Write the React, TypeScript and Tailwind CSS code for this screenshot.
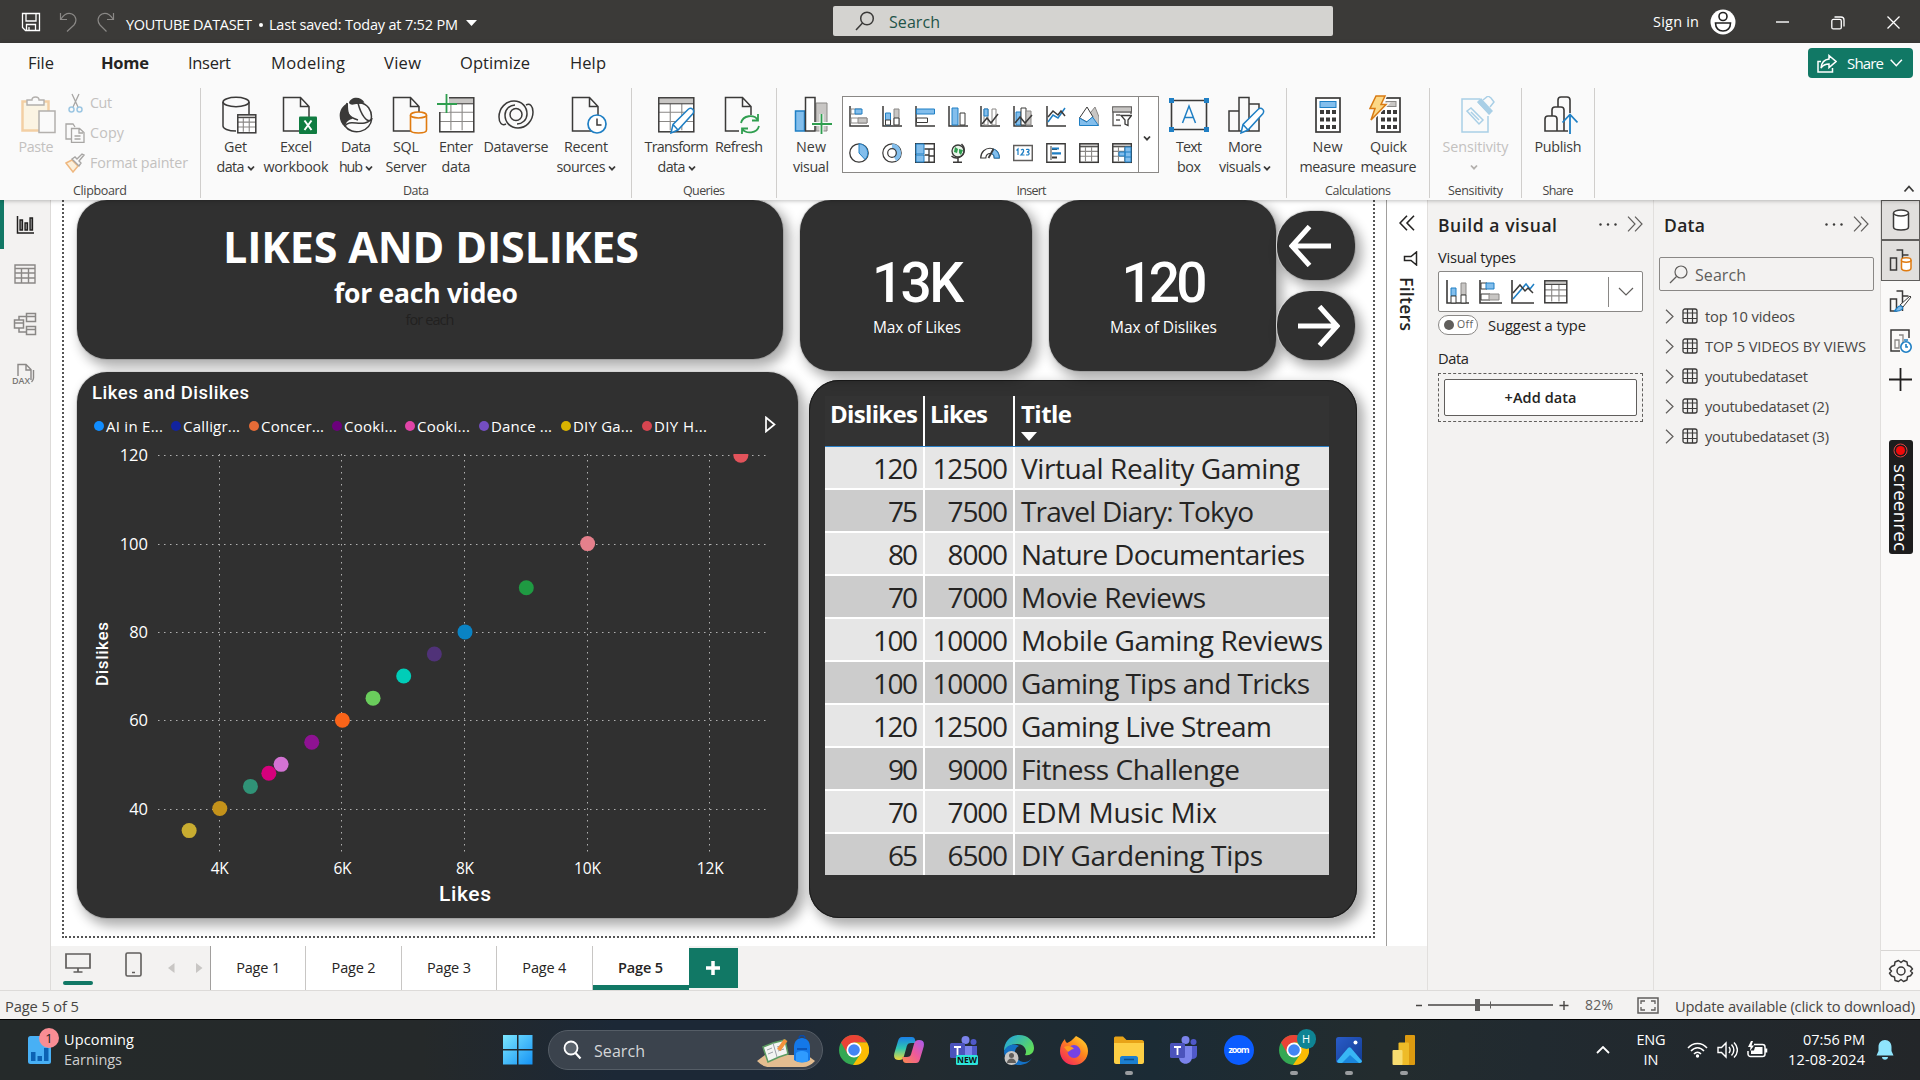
import React, { useLayoutEffect, useRef, useState } from "react";

type TProps = { w?: number; vertical?: boolean; className?: string; children: string };

/* Text whose letter spacing is tuned so that it fills a given length. */
function T({ w, vertical, className = "", children }: TProps) {
  const ref = useRef<HTMLSpanElement>(null);
  const [ls, setLs] = useState(0);
  useLayoutEffect(() => {
    if (!w || !ref.current || children.length < 2) return;
    const r = ref.current.getBoundingClientRect();
    setLs((w - (vertical ? r.height : r.width)) / (children.length - 1));
  }, []);
  return (
    <span
      ref={ref}
      className={"inline-block whitespace-nowrap " + className}
      style={vertical ? { letterSpacing: ls } : { letterSpacing: ls, marginRight: ls ? -ls : undefined }}
    >
      {children}
    </span>
  );
}

type SProps = { w: number; h: number; className?: string; children: React.ReactNode };
const S = ({ w, h, className = "", children }: SProps) => (
  <svg width={w} height={h} viewBox={`0 0 ${w} ${h}`} fill="none" className={"block shrink-0 " + className}>
    {children}
  </svg>
);

const K = "#3b3a39";
const B = "#83beec";
const BD = "#1f7fc4";
const G = "#c8c6c4";

const Chev = ({ c = "#3b3a39" }: { c?: string }) => (
  <S w={8} h={7} className="ml-[2px] mt-[2px]">
    <path d="M1 1.500l3 3.200 3-3.200" stroke={c} strokeWidth="1.800" />
  </S>
);

/* ---------- Title bar ---------- */
function TitleBar() {
  return (
    <div className="flex h-[43px] w-full items-center bg-[#3b3a38] text-white">
      <div className="flex w-[833px] items-center">
        <S w={20} h={20} className="ml-[21px]">
          <path d="M1.500 1.500h17v17H4.500l-3-3zM5 1.500v7.500h10V1.500M5.500 18.500V12.500h9V18.500M8 18v-3" stroke="#fff" strokeWidth="1.300" />
        </S>
        <S w={20} h={22} className="ml-[18px]">
          <path d="M1.500 2v6.500H8M2 8C5 3.500 9 1.500 13 3c4.500 2 5 7.500 2 11l-7 6.500" stroke="#8a8886" strokeWidth="1.200" />
        </S>
        <S w={20} h={22} className="ml-[17px]">
          <path d="M17.500 2v6.500H11M17 8C14 3.500 10 1.500 6 3 1.500 5 1 10.500 4 14l6.500 6.500" stroke="#8a8886" strokeWidth="1.200" />
        </S>
        <div className="ml-[10px] mt-[6px] flex items-center text-[14.5px] leading-5">
          <T w={126}>YOUTUBE DATASET</T>
          <span className="ml-[7px] mr-[6px] h-1 w-1 rounded-full bg-white" />
          <T w={189}>Last saved: Today at 7:52 PM</T>
          <S w={12} h={7} className="ml-[8px] -mt-[2px]">
            <path d="M0 0h11L5.500 6z" fill="#fff" />
          </S>
        </div>
      </div>
      <div className="mb-[1px] flex h-[30px] w-[500px] items-center rounded-[2px] bg-[#d4d3d0] text-[#1f5348]">
        <S w={20} h={20} className="ml-[22px]">
          <circle cx="12" cy="7.500" r="6.300" stroke={K} strokeWidth="1.500" />
          <path d="M7.500 12L1 19" stroke={K} strokeWidth="1.500" />
        </S>
        <T w={51} className="ml-[14px] mt-[1px] text-base leading-5">Search</T>
      </div>
      <div className="ml-[320px] flex items-center">
        <T w={46} className="text-[14.5px] leading-5">Sign in</T>
        <S w={26} h={26} className="ml-[11px]">
          <circle cx="13" cy="13" r="12.500" fill="#fff" />
          <circle cx="13" cy="7.500" r="4" stroke="#222" strokeWidth="1.600" />
          <path d="M5.500 14h15c0 5-3 8-7.500 8s-7.500-3-7.500-8z" stroke="#222" strokeWidth="1.600" />
        </S>
        <S w={13} h={2} className="ml-[40px]"><path d="M0 1h13" stroke="#fff" strokeWidth="1.400" /></S>
        <S w={14} h={14} className="ml-[42px] mt-[2px]">
          <rect x="0.800" y="3.400" width="9.500" height="9.500" rx="1.500" stroke="#fff" strokeWidth="1.300" />
          <path d="M3.500 1h6.500a3 3 0 0 1 3 3v6.500" stroke="#fff" strokeWidth="1.300" />
        </S>
        <S w={13} h={13} className="ml-[42px] mt-[2px]"><path d="M.5.5l12 12M12.500.5l-12 12" stroke="#fff" strokeWidth="1.300" /></S>
      </div>
    </div>
  );
}

/* ---------- Menu ---------- */
function Menu() {
  return (
    <div className="flex h-[45px] items-center text-[16.500px] text-[#252423]">
      <T w={26} className="ml-[28px] -mt-[5px]">File</T>
      <T w={48} className="ml-[47px] -mt-[5px] font-bold">Home</T>
      <T w={43} className="ml-[39px] -mt-[5px]">Insert</T>
      <T w={74} className="ml-[40px] -mt-[5px]">Modeling</T>
      <T w={37} className="ml-[39px] -mt-[5px]">View</T>
      <T w={70} className="ml-[39px] -mt-[5px]">Optimize</T>
      <T w={36} className="ml-[40px] -mt-[5px]">Help</T>
      <div className="-mt-[5px] ml-auto mr-[7px] flex h-[30px] w-[105px] items-center rounded-[4px] bg-[#117865] text-white">
        <S w={20} h={19} className="ml-[9px]">
          <path d="M4 7.500H1V18h14.500v-4M12 1.500l7 6-7 6v-3.500c-4 0-6 1-8 4 .5-5 3-8.500 8-9z" stroke="#fff" strokeWidth="1.500" />
        </S>
        <T w={37} className="ml-[10px] text-[15px]">Share</T>
        <S w={13} h={8} className="ml-[6px]"><path d="M.7.7l5.600 6 5.600-6" stroke="#fff" strokeWidth="1.500" /></S>
      </div>
    </div>
  );
}

/* ---------- Ribbon icons ---------- */
const Doc = () => <path d="M1.500 1.500h17l8.500 9v24.500H1.500zM18.500 1.500v9h8.500" stroke={K} strokeWidth="1.500" fill="#fafafa" />;
const Grid = ({ x = 0, y = 0, w = 35, h = 36, c = K, head = G }: any) => (
  <g transform={`translate(${x} ${y})`}>
    <rect x=".8" y=".8" width={w} height={h} fill="#fff" />
    <path
      d={`M1 ${h * 0.45}h${w}M1 ${h * 0.72}h${w}M${w * 0.35} ${h * 0.18}v${h * 0.8}M${w * 0.68} ${h * 0.18}v${h * 0.8}`}
      stroke="#8a8886"
      strokeWidth="1.100"
    />
    <rect x="1.500" y="1.500" width={w - 1.5} height={h * 0.16} fill={head} />
    <path d={`M1 ${h * 0.2}h${w}`} stroke={c} />
    <rect x=".8" y=".8" width={w} height={h} stroke={c} strokeWidth="1.500" />
  </g>
);
const Pencil = () => (
  <path d="M13 37l2-8.500L30.500 13c3-2 6.500 1 4.500 4.500L20 34zM15 28.500l5 5.500" fill="#fff" stroke={BD} strokeWidth="1.500" />
);

const ic = {
  get: (
    <S w={36} h={38}>
      <path d="M2 6v24c0 2.500 5 5 13 5" stroke={K} strokeWidth="1.500" />
      <path d="M28 6v12" stroke={K} strokeWidth="1.500" />
      <ellipse cx="15" cy="6" rx="13" ry="4.700" stroke={K} strokeWidth="1.500" />
      <Grid x={16} y={18} w={18} h={18} />
    </S>
  ),
  excel: (
    <S w={36} h={38}>
      <Doc />
      <rect x="17" y="20.500" width="18" height="17.500" rx="1" fill="#107c41" />
      <path d="M22.500 24.500l7 9.500M29.500 24.500l-7 9.500" stroke="#fff" strokeWidth="2" />
    </S>
  ),
  hub: (
    <S w={34} h={36}>
      <path d="M10 6C11-.5 22-1.500 25.500 5.500L19 7C15 7 12 9 10 6z" fill={K} />
      <path d="M9 6C-1 10-2 24 6 30c1-7 6-8 8-8C9 18 9 12 9 6z" fill={K} />
      <path d="M8 6c-2 9 1 14 11 17M19 6c9-1 15 8 13 17-4 3-10-5-13-17zM6 29c4-8 20 3 27-8-2 15-20 18-27 8z" stroke={K} strokeWidth="1.500" />
    </S>
  ),
  sql: (
    <S w={36} h={38}>
      <Doc />
      <path d="M18.500 19v15c0 4 16 4 16 0V19" fill="#fafafa" stroke="#e07b10" strokeWidth="1.600" />
      <ellipse cx="26.500" cy="19" rx="8" ry="3" fill="#fafafa" stroke="#e07b10" strokeWidth="1.600" />
    </S>
  ),
  enter: (
    <S w={38} h={39}>
      <Grid x={2} y={3} w={34} h={34} />
      <rect x="0" y="0" width="12" height="18" fill="#fafafa" />
      <path d="M9.500 0v19M0 10h20" stroke="#2f9e4f" strokeWidth="1.800" />
    </S>
  ),
  dv: (
    <S w={36} h={32}>
      <path d="M8 25C4 27 1 24 1 18 1 9 8 2 16 2c8 0 13 6 13 13 0 6-5 10-10 10" stroke={K} strokeWidth="1.500" />
      <path d="M28 6c4-2 7 1 7 7 0 9-7 16-15 16-8 0-13-6-13-13 0-6 5-10 10-10" stroke={K} strokeWidth="1.500" />
      <circle cx="18" cy="15.500" r="6" stroke={K} strokeWidth="1.500" />
    </S>
  ),
  recent: (
    <S w={36} h={38}>
      <Doc />
      <circle cx="26" cy="28" r="9" fill="#fff" stroke={BD} strokeWidth="1.700" />
      <path d="M26 22.500V29h4.500" stroke={K} strokeWidth="1.500" />
    </S>
  ),
  transform: (
    <S w={38} h={38}>
      <Grid x={0} y={1} w={35} h={34} />
      <Pencil />
    </S>
  ),
  refresh: (
    <S w={36} h={38}>
      <Doc />
      <rect x="15" y="19" width="21" height="19" fill="#fafafa" />
      <path d="M17 27c2-8 13-9 17-3M34 18v6.500h-6M35 30c-2 8-13 8-17 3M18 39v-6.500h6" stroke="#2f9e4f" strokeWidth="1.800" />
    </S>
  ),
  newvis: (
    <S w={38} h={38}>
      <path d="M22 7h11v28H22z" fill={G} stroke="#8a8886" />
      <path d="M1.500 15h9v20h-9z" fill={B} stroke={BD} strokeWidth="1.500" />
      <path d="M11.500 1.500h9.500v33.500h-9.500z" fill="#fff" stroke={K} strokeWidth="1.500" />
      <path d="M27.500 18v20M18 28h20" stroke="#fafafa" strokeWidth="4" />
      <path d="M27.500 18v20M18 28h20" stroke="#2f9e4f" strokeWidth="1.800" />
    </S>
  ),
  textbox: (
    <S w={40} h={34}>
      <path d="M2.500 2.500h35v29h-35z" stroke={K} strokeWidth="1.600" />
      <path d="M0 0h5v5H0zM35 0h5v5h-5zM0 29h5v5H0zM35 29h5v5h-5z" fill={BD} />
      <path d="M13.500 25l6.500-17 6.500 17M16 19.500h8" stroke={BD} strokeWidth="1.500" />
    </S>
  ),
  more: (
    <S w={38} h={38}>
      <path d="M1 15h10v20H1zM11 1.500h10v33.500H11zM21 8h10v27H21z" stroke={K} strokeWidth="1.500" />
      <Pencil />
    </S>
  ),
  calc: (
    <S w={26} h={36}>
      <rect x="1" y="1" width="24" height="34" stroke={K} strokeWidth="1.700" fill="#fff" />
      <rect x="5" y="4.500" width="16" height="6" fill={B} stroke={BD} />
      <path d="M5 15h16M5 22.500h16M5 30h16" stroke={K} strokeWidth="4" strokeDasharray="4 2" />
    </S>
  ),
  quick: (
    <S w={32} h={38}>
      <rect x="8" y="3" width="23" height="34" stroke={K} strokeWidth="1.700" fill="#fff" />
      <rect x="17" y="6.500" width="10" height="5" fill={G} stroke="#8a8886" />
      <path d="M12 17h16M12 24.500h16M12 32h16" stroke={K} strokeWidth="4" strokeDasharray="4 2" />
      <path d="M7 1h9l-4 8.500h5L2 25l4-11.500H1z" fill="#fcd886" stroke="#fafafa" strokeWidth="4" />
      <path d="M7 1h9l-4 8.500h5L2 25l4-11.500H1z" fill="#fcd886" stroke="#d87a13" strokeWidth="1.500" />
    </S>
  ),
  sens: (
    <S w={34} h={38}>
      <path d="M19 3H1v33h26V20" stroke="#a9cfe6" strokeWidth="1.500" />
      <path d="M6 15l4-3 12 12-4 4zM10 16l8 8" stroke="#a9cfe6" strokeWidth="1.500" />
      <path d="M16 6l4-4 12 13-4 4z" fill="#a9cfe6" />
      <path d="M22 4l5-4 3 2 3 4-4 5M17 6l12 12" stroke="#a9cfe6" strokeWidth="1.500" />
    </S>
  ),
  publish: (
    <S w={34} h={38}>
      <path d="M1 35V23c0-2 1-3 3-3h6c2 0 3 1 3 3v12zM8 20v-6c0-2 1-3 3-3h6c2 0 3 1 3 3v21h-7M14 11V4c0-2 1-3 3-3h6c2 0 3 1 3 3v13M20 35h4" stroke={K} strokeWidth="1.600" />
      <path d="M26 38V19M18.500 26.500l7.500-8 7.500 8" stroke={BD} strokeWidth="1.800" />
    </S>
  ),
};

type BP = { cls: string; icon: React.ReactNode; a: string; aw: number; b?: string; bw?: number; chev?: boolean };
const Btn = ({ cls, icon, a, aw, b, bw, chev }: BP) => (
  <div className={"flex shrink-0 flex-col items-center pt-[5px] " + cls}>
    <div className="flex h-[44px] items-center justify-center">{icon}</div>
    <T w={aw} className="h-5 leading-5">{a}</T>
    {b && (
      <div className="flex h-5 items-center leading-5">
        <T w={bw}>{b}</T>
        {chev && <Chev />}
      </div>
    )}
  </div>
);

type GP = { cls: string; pad?: string; label: string; lw: number; children: React.ReactNode };
const Group = ({ cls, pad = "", label, lw, children }: GP) => (
  <div className={"flex h-[110px] shrink-0 flex-col border-r border-[#d0cecc] " + cls}>
    <div className={"flex h-[95px] shrink-0 " + pad}>{children}</div>
    <div className="flex justify-center text-[12.500px] leading-[15px] text-[#484644]"><T w={lw}>{label}</T></div>
  </div>
);

const axis = <path d="M1 0v20h19" stroke={K} strokeWidth="1.500" />;
const gallery: React.ReactNode[] = [
  <><path d="M1 0v20h19" stroke={K} strokeWidth="1.500" /><path d="M2 3h10v5H2zM2 12h16v5H2z" fill="#fff" stroke="#8a8886" /><path d="M6 3h7v5H6z" fill={B} stroke={BD} /><path d="M9 12h9v5H9z" fill={G} stroke="#8a8886" /></>,
  <>{axis}<path d="M3.500 7h5v12h-5z" fill={B} stroke={BD} /><path d="M12 3h5v16h-5z" fill={G} stroke="#8a8886" /><path d="M3.500 14h5v5h-5zM12 12h5v7h-5z" fill="#fff" stroke={K} /></>,
  <><path d="M1 0v20h19" stroke={K} strokeWidth="1.500" /><path d="M1.500 3h18v5h-18z" fill={B} stroke={BD} /><path d="M1.500 12h11v4.500h-11z" fill="#fff" stroke={K} /></>,
  <>{axis}<path d="M4 2h6v17H4z" fill={B} stroke={BD} /><path d="M12 7h5v12h-5z" fill="#fff" stroke={K} /></>,
  <>{axis}<path d="M4 3h4v16H4zM12 3h4v16h-4z" fill="#fff" stroke="#8a8886" /><path d="M4 3h4v7H4z" fill={B} stroke={BD} /><path d="M2 18l5-6 4 5 7-9" stroke={K} strokeWidth="1.500" /></>,
  <>{axis}<path d="M3 6h5v13H3z" fill={B} stroke={BD} /><path d="M8 2h5v17H8z" fill="#fff" stroke={K} /><path d="M13 5h5v14h-5z" fill={G} stroke="#8a8886" /><path d="M2 17l5-6 5 6 7-8" stroke={K} strokeWidth="1.500" /></>,
  <>{axis}<path d="M2 16l5-7 5 3 7-10" stroke={BD} strokeWidth="1.500" /><path d="M2 11l5-6 5 4 3-4 4 5" stroke={K} strokeWidth="1.500" /></>,
  <><path d="M13 19l-5-8 8-10 4 10v8z" fill={G} stroke="#8a8886" /><path d="M.5 12L8 1l6 10-6 5z" fill="#fff" stroke={K} /><path d="M.5 19.500V12l7 4 6-5 6 8.500z" fill={B} stroke={BD} /></>,
  <><path d="M.8 1h18.500v5H.8zM1 6v13.500h8M19 6v2M4 9h4M4 14h4" stroke="#605e5c" strokeWidth="1.400" /><path d="M1 1.500h18v3.500H1z" fill={G} /><path d="M9 9.500h10.500L16 14v5.500l-3-1.500v-4z" fill="#fff" stroke={K} strokeWidth="1.300" /></>,
  <><circle cx="10" cy="10" r="9.200" fill="#fff" stroke={K} strokeWidth="1.300" /><path d="M10 .8a9.200 9.200 0 0 1 6 15.700L10 10z" fill={B} stroke={BD} /></>,
  <><circle cx="10" cy="10" r="7" stroke="#fff" strokeWidth="5" /><circle cx="10" cy="10" r="9.200" stroke={K} strokeWidth="1.200" /><path d="M10 3a7 7 0 0 1 3 13" stroke={B} strokeWidth="5" /><circle cx="10" cy="10" r="4.300" stroke={K} strokeWidth="1.200" /></>,
  <><path d="M.7.7h18.600v18.600H.7z" fill="#fff" stroke={K} strokeWidth="1.400" /><path d="M1 1h8v10H1zM1 12h8v7H1z" fill={B} stroke={BD} /><path d="M9.500 6h9.500M14 6v13M9.500 12h5M14 13h5" stroke={K} strokeWidth="1.300" /></>,
  <><circle cx="10" cy="8" r="6" fill="#e8f3e8" stroke={K} strokeWidth="1.300" /><path d="M7 4l3 2-1 4-3-1zM11 6l4 1-2 5-2-2z" fill="#2f9e4f" /><path d="M13.500 1c5 5 3 13-5 14-2 0-4-1-5-2M10 15v4M5 19.300h9" stroke={K} strokeWidth="1.500" /></>,
  <><path d="M.7 15C1 2 19 2 19.300 15h-5c0-6-8-6-8.500 0z" fill="#fff" stroke={K} strokeWidth="1.200" /><path d="M13 6c4 1 6 4 6.300 9h-5c0-3-1-4-3-4.500z" fill={B} stroke={BD} /><path d="M8.500 15l5-9" stroke={K} strokeWidth="1.800" /></>,
  <><path d="M.7 2.500h18.600v15H.7z" fill="#fff" stroke="#605e5c" strokeWidth="1.500" /><path d="M3.500 7.500L5 6v6M8 7c3-2 4 1 0 5h3.500M13 6.500c4-1 4 2 1 2.500 3 .5 3 4-1 2.700" stroke={BD} strokeWidth="1.200" /></>,
  <><path d="M.8.8h18.400v18.400H.8z" fill="#fff" stroke={K} strokeWidth="1.400" /><path d="M5 3v14" stroke={K} /><path d="M6 6h5M6 14.500h5" stroke={K} strokeWidth="2" /><path d="M6 10.300h9M6 5.500h7" stroke={BD} strokeWidth="2.200" /></>,
  <Grid w={18.5} h={18.5} />,
  <><Grid w={18.5} h={18.5} /><path d="M13 4h6v15h-6zM7 9h6v4H7z" fill={B} stroke={BD} /><path d="M13 9h6M13 14h6" stroke={BD} /></>,
];

function Ribbon() {
  return (
    <div className="flex h-[112px] items-start text-[14.300px] text-[#3b3a39]">
      <Group cls="w-[201px]" label="Clipboard" lw={54}>
        <div className="flex w-full text-[#c3c1bf]">
          <Btn
            cls="ml-[3px] w-[66px]"
            icon={
              <div className="pl-[5px]">
                <S w={36} h={38}>
                  <path d="M1.500 5.500h26v29h-26z" fill="#fbf4e3" stroke="#f3cfa4" strokeWidth="2.500" />
                  <path d="M6 4h5c0-4 7-4 7 0h5v5H6z" fill="#fafafa" stroke="#b3b0ad" strokeWidth="1.400" />
                  <path d="M18 15h16v21.500H18z" fill="#fafafa" stroke="#b3b0ad" strokeWidth="1.500" />
                </S>
              </div>
            }
            a="Paste"
            aw={35}
          />
          <div className="flex flex-col">
            <div className="flex h-[30px] items-center">
              <S w={16} h={20} className="-ml-[1px] mr-[6px]"><path d="M4 1l6 13M11 1L5 14" stroke="#a8a6a4" strokeWidth="1.300" /><circle cx="3.500" cy="16.500" r="2.500" stroke="#9cc6e2" strokeWidth="1.500" /><circle cx="11.500" cy="16.500" r="2.500" stroke="#9cc6e2" strokeWidth="1.500" /></S>
              <T w={22}>Cut</T>
            </div>
            <div className="flex h-[30px] items-center">
              <S w={20} h={20} className="-ml-[4px] mr-[5px]"><path d="M6 16H1V1h7l2 3M6.500 5.500h8l4.500 4v10H6.500zM14 6v4h4M9.500 13h6M9.500 16h6" stroke="#a8a6a4" strokeWidth="1.300" /></S>
              <T w={34}>Copy</T>
            </div>
            <div className="flex h-[30px] items-center">
              <S w={20} h={20} className="-ml-[4px] mr-[5px]"><path d="M1 10l6-3 6 6-5 6z" fill="#fbf0dc" stroke="#efb880" strokeWidth="1.500" /><path d="M7 6l7 7 2-3-2-2 5-6-2-1-5 5-2-2z" stroke="#a8a6a4" strokeWidth="1.400" /></S>
              <T w={98}>Format painter</T>
            </div>
          </div>
        </div>
      </Group>
      <Group cls="w-[431px]" pad="pl-[10px]" label="Data" lw={26}>
        <Btn cls="w-[49px]" icon={<div className="pl-[6px]">{ic.get}</div>} a="Get" aw={23} b="data" bw={28} chev />
        <Btn cls="w-[72px]" icon={<div className="pl-[8px]">{ic.excel}</div>} a="Excel" aw={32} b="workbook" bw={65} />
        <Btn cls="w-[48px]" icon={ic.hub} a="Data" aw={30} b="hub" bw={24} chev />
        <Btn cls="w-[52px]" icon={<div className="pl-[7px]">{ic.sql}</div>} a="SQL" aw={26} b="Server" bw={41} />
        <Btn cls="w-[48px]" icon={<div className="-mt-[3px]">{ic.enter}</div>} a="Enter" aw={34} b="data" bw={29} />
        <Btn cls="w-[72px]" icon={ic.dv} a="Dataverse" aw={65} />
        <Btn cls="w-[68px]" icon={<div className="pl-[6px]">{ic.recent}</div>} a="Recent" aw={44} b="sources" bw={49} chev />
      </Group>
      <Group cls="w-[145px]" pad="pl-[11px]" label="Queries" lw={42}>
        <Btn cls="w-[67px]" icon={ic.transform} a="Transform" aw={64} b="data" bw={28} chev />
        <Btn cls="w-[58px]" icon={<div className="pl-[5px]">{ic.refresh}</div>} a="Refresh" aw={48} />
      </Group>
      <Group cls="w-[510px]" pad="pl-[13px]" label="Insert" lw={30}>
        <Btn cls="w-[42px]" icon={<div className="pl-[4px]">{ic.newvis}</div>} a="New" aw={30} b="visual" bw={36} />
        <div className="ml-[10px] mt-[8px] flex h-[77px] w-[317px] shrink-0 border border-[#8a8886] bg-white">
          <div className="grid w-[295px] grid-cols-9 grid-rows-2 items-center justify-items-center pt-[1px]">
            {gallery.map((g, i) => (
              <S key={i} w={20} h={21}>{g}</S>
            ))}
          </div>
          <div className="flex flex-1 items-center justify-center border-l border-[#8a8886] pr-[5px] pt-[5px]"><Chev /></div>
        </div>
        <Btn cls="ml-[5px] w-[50px]" icon={ic.textbox} a="Text" aw={26} b="box" bw={24} />
        <Btn cls="w-[62px]" icon={<div className="pl-[4px]">{ic.more}</div>} a="More" aw={34} b="visuals" bw={42} chev />
      </Group>
      <Group cls="w-[143px]" pad="pl-[10px]" label="Calculations" lw={66}>
        <Btn cls="w-[61px]" icon={ic.calc} a="New" aw={30} b="measure" bw={56} />
        <Btn cls="w-[61px]" icon={<div className="-ml-[7px] -mt-[2px]">{ic.quick}</div>} a="Quick" aw={37} b="measure" bw={56} />
      </Group>
      <Group cls="w-[92px]" label="Sensitivity" lw={55}>
        <div className="flex w-full flex-col items-center pt-[5px] text-[#c3c1bf]">
          <div className="flex h-[44px] items-center pl-[4px]">{ic.sens}</div>
          <T w={66} className="h-5 leading-5">Sensitivity</T>
          <div className="mt-[5px] pr-[5px]"><Chev c="#b3b0ad" /></div>
        </div>
      </Group>
      <Group cls="w-[73px]" label="Share" lw={31}>
        <Btn cls="w-[72px]" icon={<div className="pl-[6px]">{ic.publish}</div>} a="Publish" aw={47} />
      </Group>
      <S w={12} h={8} className="ml-auto mr-[5px] mt-[97px]"><path d="M1.500 6.500l4.500-5 4.500 5" stroke={K} strokeWidth="1.800" /></S>
    </div>
  );
}

/* ---------- Left rail ---------- */
function LeftRail() {
  const c = "#8a8886";
  return (
    <div className="flex w-[51px] shrink-0 flex-col items-center border-r border-[#dddbd9] bg-[#f3f2f1]">
      <div className="flex h-[49px] w-full items-center border-l-[4px] border-[#117865] pl-[12px]">
        <S w={19} h={19}><path d="M1.500 1v17H18" stroke="#201f1e" strokeWidth="1.500" /><path d="M4 5h2.500v10H4zM9 8h2.500v7H9zM14 3h2.500v12H14z" fill="#888" stroke="#201f1e" strokeWidth="1.300" /></S>
      </div>
      <S w={22} h={20} className="mt-[15px]"><path d="M1 1h20v18H1zM1 4.500h20M1 9h20M1 14h20M7.500 4.500V19M14.500 4.500V19" stroke={c} strokeWidth="1.400" /></S>
      <S w={24} h={24} className="mt-[28px]"><path d="M13.500 1.500h9v8h-9zM13.500 14.500h9v8h-9zM1.500 8h9v8h-9zM1.500 11h9M13.500 4.500h9M13.500 17.500h9M6 8V4.500h7M6 16v4h7" stroke={c} strokeWidth="1.500" /></S>
      <div className="mt-[27px] flex flex-col items-center pr-[3px]">
        <S w={24} h={23}><path d="M6 13V1.500h8l5 5V17M14 1.500V7h5M21.500 7v8c0 2-1 3-2 4" stroke={c} strokeWidth="1.400" /><text x="0" y="21" fontSize="9" fontWeight="600" fill="#797775" textLength="18">DAX</text></S>
      </div>
    </div>
  );
}

/* ---------- Report canvas ---------- */
const card = "bg-[#303030] shadow-[5px_6px_12px_2px_rgba(0,0,0,0.32),0_0_0_1px_#e4e4e4] ";

const points: [number, number, string][] = [
  [3.5, 35, "#c8ac30"], [4, 40, "#c4921a"], [4.5, 45, "#309377"], [4.8, 48, "#d6007c"], [5, 50, "#d373d3"],
  [5.5, 55, "#8e1292"], [6, 60, "#fa6419"], [6.5, 65, "#6acd5c"], [7, 70, "#00cdb8"], [7.5, 75, "#503278"],
  [8, 80, "#0a83c4"], [9, 90, "#1f9a42"], [10, 100, "#e5808c"], [12.5, 120, "#e2535b"],
];
const px = (k: number) => 142.8 + (k - 4) * 61.3;
const py = (d: number) => 366.5 - (d - 40) * 4.415;

const legend: [string, string, string, number][] = [
  ["bg-[#118dff]", "w-[77px]", "AI in E...", 57],
  ["bg-[#12239e]", "w-[78px]", "Calligr...", 57],
  ["bg-[#e66c37]", "w-[83px]", "Concer...", 63],
  ["bg-[#6b007b]", "w-[73px]", "Cooki...", 53],
  ["bg-[#e044a7]", "w-[74px]", "Cooki...", 53],
  ["bg-[#744ec2]", "w-[82px]", "Dance ...", 61],
  ["bg-[#d9b300]", "w-[81px]", "DIY Ga...", 60],
  ["bg-[#d64550]", "w-[70px]", "DIY H...", 53],
];

function ChartCard() {
  return (
    <div className={card + "mt-[13px] flex h-[546px] w-[721px] flex-col rounded-[30px] text-white"}>
      <T w={157} className="ml-[15px] mt-[9px] self-start font-['Roboto'] text-[18.500px] font-medium leading-6">Likes and Dislikes</T>
      <div className="ml-[17px] mt-[10px] flex h-[22px] items-center text-[15px] leading-5">
        {legend.map(([c, w, t, tw], i) => (
          <div key={i} className={"flex shrink-0 items-center " + w}>
            <span className={"mr-[2px] h-[10px] w-[10px] shrink-0 rounded-full " + c} />
            <T w={tw}>{t}</T>
          </div>
        ))}
        <S w={11} h={17} className="-mt-[3px] ml-[53px]"><path d="M1 1.500l8.500 7L1 15.500z" stroke="#fff" strokeWidth="1.700" /></S>
      </div>
      <svg width="721" height="480" viewBox="0 -5 721 480" fill="none" className="block">
        {[120, 100, 80, 60, 40].map((d) => (
          <g key={d}>
            <path d={`M81 ${Math.round(py(d)) + 0.5}H690`} stroke="#b0b0b0" strokeWidth="1" strokeDasharray="1.5 4.500" />
            <text x="71" y={py(d) + 6} textAnchor="end" fontSize="16.500" fill="#fff">{d}</text>
          </g>
        ))}
        {[4, 6, 8, 10, 12].map((k) => (
          <g key={k}>
            <path d={`M${Math.round(px(k)) - 0.5} 12V412`} stroke="#b0b0b0" strokeWidth="1" strokeDasharray="1.5 4.500" />
            <text x={px(k)} y="432" textAnchor="middle" fontSize="15.500" fill="#fff" textLength={k > 9 ? 27 : 18}>{k + "K"}</text>
          </g>
        ))}
        <clipPath id="plot"><rect x="70" y="12" width="640" height="410" /></clipPath>
        <g clipPath="url(#plot)">
          {points.map(([k, d, c]) => (
            <circle key={k} cx={px(k)} cy={py(d)} r="7.500" fill={c} />
          ))}
        </g>
        <text x="388" y="459" textAnchor="middle" fontSize="21" fontWeight="500" fontFamily="Roboto" fill="#fff" textLength="52">Likes</text>
        <text transform="translate(31 212) rotate(-90)" textAnchor="middle" fontSize="17" fontWeight="500" fontFamily="Roboto" fill="#fff" textLength="64">Dislikes</text>
      </svg>
    </div>
  );
}

const rows: [string, string, string, number][] = [
  ["120", "12500", "Virtual Reality Gaming", 279],
  ["75", "7500", "Travel Diary: Tokyo", 233],
  ["80", "8000", "Nature Documentaries", 284],
  ["70", "7000", "Movie Reviews", 185],
  ["100", "10000", "Mobile Gaming Reviews", 302],
  ["100", "10000", "Gaming Tips and Tricks", 289],
  ["120", "12500", "Gaming Live Stream", 251],
  ["90", "9000", "Fitness Challenge", 219],
  ["70", "7000", "EDM Music Mix", 196],
  ["65", "6500", "DIY Gardening Tips", 242],
];

function TableCard() {
  return (
    <div className="ml-[9px] mt-[9px] h-[538px] w-[548px] rounded-[30px] bg-[#303030] pl-[16px] pt-[16px] shadow-[5px_6px_12px_2px_rgba(0,0,0,0.32),inset_0_0_0_1px_#1c1c1c]">
      <div className="flex h-[51px] w-[504px] border-b-[1.500px] border-[#2a80c8] bg-[#333333] text-2xl font-bold leading-[35px] text-white">
        <div className="w-[100px] border-r-2 border-white pl-[5px]"><T w={88}>Dislikes</T></div>
        <div className="w-[90px] border-r-2 border-white pl-[5px]"><T w={58}>Likes</T></div>
        <div className="flex flex-col items-start pl-[6px]">
          <T w={51}>Title</T>
          <S w={16} h={9} className="mt-[1px]"><path d="M0 0h16L8 9z" fill="#fff" /></S>
        </div>
      </div>
      {rows.map(([d, l, t, w], i) => (
        <div
          key={i}
          className={
            "flex h-[43px] w-[504px] overflow-hidden text-[28px] leading-[43px] text-[#252423] " +
            (i < 9 ? "border-b-2 border-white " : "h-[41px]! ") +
            (i % 2 ? "bg-[#cccccc]" : "bg-[#e6e6e6]")
          }
        >
          <div className="w-[100px] border-r-2 border-white pr-[5px] text-right"><T w={d.length * 15}>{d}</T></div>
          <div className="w-[90px] border-r-2 border-white pr-[5px] text-right"><T w={l.length * 15.1}>{l}</T></div>
          <div className="pl-[6px]"><T w={w}>{t}</T></div>
        </div>
      ))}
    </div>
  );
}

function Canvas() {
  return (
    <div className="flex h-[746px] w-[1336px] shrink-0 overflow-hidden border-r border-[#a19f9d] bg-white pl-[12px]">
      <div className="-ml-[1px] flex h-[738px] w-[1313px] border-x-2 border-b-2 border-dotted border-[#555] pl-[13px]">
        <div className="w-[723px] shrink-0">
          <div className={card + "flex h-[159px] w-[706px] flex-col items-center rounded-[30px] text-white"}>
            <T w={416} className="ml-[2px] mt-[20px] text-[43px] font-bold leading-[54px]">LIKES AND DISLIKES</T>
            <div className="mt-[1px] pr-[8px]"><T w={184} className="text-[26.500px] font-bold leading-[36px]">for each video</T></div>
            <T w={49} className="mt-[-1px] text-[14.500px] leading-5 text-[#222120]">for each</T>
          </div>
          <ChartCard />
        </div>
        <div className="w-[570px] shrink-0">
          <div className="flex">
            <div className={card + "flex h-[171px] w-[232px] flex-col items-center rounded-[31px] text-white"}>
              <div className="mt-[52px] pl-[4px]"><T w={92} className="font-['Roboto'] text-[55px] font-medium leading-[62px]">13K</T></div>
              <T w={88} className="ml-[2px] mt-[3px] text-[15.500px] leading-5">Max of Likes</T>
            </div>
            <div className={card + "ml-[17px] flex h-[171px] w-[227px] flex-col items-center rounded-[31px] text-white"}>
              <div className="mt-[52px] pl-[4px]"><T w={86} className="font-['Roboto'] text-[55px] font-medium leading-[62px]">120</T></div>
              <T w={107} className="ml-[2px] mt-[3px] text-[15.500px] leading-5">Max of Dislikes</T>
            </div>
            <div className="ml-[1px] flex flex-col gap-[11px] pt-[11px]">
              <div className={card + "flex h-[69px] w-[78px] items-center rounded-[33px] pl-[12px]"}>
                <S w={43} h={42}><path d="M20.500 1.500L3 21l17.500 19.500M3 21h39" stroke="#fff" strokeWidth="5" /></S>
              </div>
              <div className={card + "flex h-[69px] w-[78px] items-center rounded-[33px] pl-[20px]"}>
                <S w={43} h={42}><path d="M22.500 1.500L40 21 22.500 40.500M40 21H1" stroke="#fff" strokeWidth="5" /></S>
              </div>
            </div>
          </div>
          <TableCard />
        </div>
      </div>
    </div>
  );
}

/* ---------- Page tabs ---------- */
function PageTabs() {
  return (
    <div className="flex h-[44px] items-start">
      <div className="flex h-[44px] w-[160px] items-center border-r border-[#a19f9d]">
        <div className="ml-[12px] flex w-[30px] flex-col items-center">
          <S w={26} h={20} className="mt-[2px]"><path d="M1 1h24v14H1zM13 15v4M8.500 19h9" stroke="#605e5c" strokeWidth="1.700" /></S>
          <div className="mt-[8px] h-[4px] w-[30px] rounded-sm bg-[#117865]" />
        </div>
        <S w={17} h={25} className="-mt-[7px] ml-[32px]"><rect x="1" y="1" width="15" height="23" rx="1.500" stroke="#605e5c" strokeWidth="1.600" /><path d="M7 20.500h3" stroke="#605e5c" strokeWidth="1.500" /></S>
        <S w={7} h={10} className="ml-[26px]"><path d="M6.500 0v10L0 5z" fill="#c8c6c4" /></S>
        <S w={7} h={10} className="ml-[21px]"><path d="M0 0v10l6.500-5z" fill="#c8c6c4" /></S>
      </div>
      {[1, 2, 3, 4, 5].map((n) => (
        <div
          key={n}
          className={
            "flex h-[44px] items-center justify-center bg-white text-[14.500px] text-[#252423] " +
            (n === 5 ? "w-[96px] border-b-[5px] border-[#117865] pt-[5px] font-semibold" : "w-[95.4px] border-r border-[#c8c6c4]")
          }
        >
          <T w={n === 5 ? 45 : 44}>{"Page " + n}</T>
        </div>
      ))}
      <div className="mt-[2px] flex h-[40px] w-[49px] items-center justify-center bg-[#117865]">
        <S w={14} h={14}><path d="M7 0v14M0 7h14" stroke="#fff" strokeWidth="3.500" /></S>
      </div>
    </div>
  );
}

/* ---------- Right panes ---------- */
const Dbl = ({ left }: { left?: boolean }) => (
  <S w={16} h={16} className={left ? "rotate-180" : ""}><path d="M1 .7L8 8l-7 7.300M8 .7L15 8l-7 7.300" stroke={left ? "#252423" : "#605e5c"} strokeWidth={left ? 1.6 : 1.2} /></S>
);
const Dots = () => <S w={18} h={3}><circle cx="1.500" cy="1.500" r="1.200" fill={K} /><circle cx="9" cy="1.500" r="1.200" fill={K} /><circle cx="16.500" cy="1.500" r="1.200" fill={K} /></S>;

function BuildPane() {
  return (
    <div className="flex w-[227px] shrink-0 flex-col border-l border-r border-[#e1dfdd] bg-[#f3f2f1] pl-[10px] text-[#252423]">
      <div className="mt-[12px] flex h-[26px] items-center text-[17.500px] font-semibold">
        <T w={119}>Build a visual</T>
        <span className="-mt-[2px] ml-[42px]"><Dots /></span>
        <span className="-mt-[2px] ml-[10px]"><Dbl /></span>
      </div>
      <div className="mt-[9px] h-5 text-[14.700px] leading-5"><T w={78}>Visual types</T></div>
      <div className="mt-[4px] flex h-[41px] w-[205px] items-center rounded-[2px] border border-[#8a8886] bg-white pl-[7px]">
        <S w={24} h={24} className="mr-[9px]"><path d="M1 0v23h22" stroke={K} strokeWidth="1.600" /><path d="M5 8h5v8H5z" fill={B} stroke={BD} /><path d="M15 3h5v12h-5z" fill={G} stroke="#8a8886" /><path d="M5 16h5v7H5zM15 15h5v8h-5z" fill="#fff" stroke={K} /></S>
        <S w={24} h={24} className="mr-[8px]"><path d="M1 0v23h22" stroke={K} strokeWidth="1.600" /><path d="M2 3h6v6H2zM2 14h9v6H2z" fill="#fff" stroke={K} /><path d="M7 3h8v6H7z" fill={B} stroke={BD} /><path d="M10 14h10v6H10z" fill={G} stroke="#8a8886" /></S>
        <S w={24} h={24} className="mr-[9px]"><path d="M1 0v23h22" stroke={K} strokeWidth="1.600" /><path d="M2 19L15 4l4 5 4-5" stroke={BD} strokeWidth="1.500" /><path d="M2 13l7-8 5 6 3-3 5 5" stroke={K} strokeWidth="1.500" /></S>
        <S w={24} h={24}><Grid w={22} h={22} /></S>
        <span className="ml-[40px] h-[30px] w-px bg-[#8a8886]" />
        <S w={16} h={9} className="ml-[9px]"><path d="M1 1l7 7 7-7" stroke="#605e5c" strokeWidth="1.200" /></S>
      </div>
      <div className="mt-[3px] flex h-5 items-center text-[14.700px]">
        <div className="flex h-5 w-[40px] items-center rounded-full border border-[#8a8886] bg-white pl-[5px] text-[10.500px] text-[#605e5c]">
          <span className="mr-[3px] h-[10px] w-[10px] rounded-full bg-[#605e5c]" /><T w={16}>Off</T>
        </div>
        <T w={98} className="ml-[10px]">Suggest a type</T>
      </div>
      <div className="mt-[13px] h-5 text-[14.700px] leading-5"><T w={31}>Data</T></div>
      <div className="mt-[5px] flex h-[49px] w-[205px] items-center justify-center border border-dashed border-[#605e5c]">
        <div className="flex h-[37px] w-[193px] items-center justify-center rounded-[2px] border border-[#605e5c] bg-white text-[14.500px] font-semibold">
          <T w={72}>+Add data</T>
        </div>
      </div>
    </div>
  );
}

const tables: [string, number][] = [
  ["top 10 videos", 90], ["TOP 5 VIDEOS BY VIEWS", 161], ["youtubedataset", 103], ["youtubedataset (2)", 124], ["youtubedataset (3)", 124],
];

function DataPane() {
  return (
    <div className="flex w-[227px] shrink-0 flex-col border-r border-[#e1dfdd] bg-[#f3f2f1] pl-[5px] text-[#3b3a39]">
      <div className="ml-[5px] mt-[12px] flex h-[26px] items-center text-[17.500px] font-semibold text-[#252423]">
        <T w={41}>Data</T>
        <span className="-mt-[2px] ml-[120px]"><Dots /></span>
        <span className="-mt-[2px] ml-[10px]"><Dbl /></span>
      </div>
      <div className="mt-[19px] flex h-[34px] w-[215px] items-center rounded-[2px] border border-[#8a8886]">
        <S w={19} h={19} className="ml-[9px]"><circle cx="12" cy="7" r="6" stroke="#605e5c" strokeWidth="1.200" /><path d="M7.500 11.500L1 18" stroke="#605e5c" strokeWidth="1.200" /></S>
        <T w={51} className="ml-[7px] mt-[1px] text-base text-[#605e5c]">Search</T>
      </div>
      <div className="mt-[10px] flex flex-col">
        {tables.map(([t, w]) => (
          <div key={t} className="flex h-[30px] items-center text-[14.700px] text-[#484644]">
            <S w={9} h={15} className="ml-[6px]"><path d="M1 .7l7 6.800-7 6.800" stroke="#605e5c" strokeWidth="1.200" /></S>
            <S w={16} h={16} className="ml-[8px]"><rect x="1" y="1" width="14" height="14" rx="2" stroke={K} strokeWidth="1.300" /><path d="M1 5h14M1 10.500h14M5.500 1v14M10.500 1v14" stroke={K} strokeWidth="1.200" /></S>
            <T w={w} className="ml-[7px]">{t}</T>
          </div>
        ))}
      </div>
    </div>
  );
}

const OutBars = () => <path d="M1.500 10h6v12h-6zM7.500 2h6v20M13.500 7h6" stroke={K} strokeWidth="1.500" />;

function RightRail() {
  return (
    <div className="flex flex-1 flex-col items-center bg-[#faf9f8]">
      <div className="flex h-[40px] w-full items-center justify-center border border-[#605e5c] bg-[#e1dfdd]">
        <S w={18} h={22}><path d="M1.500 4v14c0 4 15 4 15 0V4" fill="#fff" stroke={K} strokeWidth="1.500" /><ellipse cx="9" cy="4" rx="7.500" ry="3" fill="#fff" stroke={K} strokeWidth="1.500" /></S>
      </div>
      <div className="flex h-[41px] w-full items-center justify-center border border-[#605e5c] bg-[#e1dfdd] pb-[1px]">
        <S w={24} h={24}><OutBars /><path d="M12.500 12v8c0 3.500 9.500 3.500 9.500 0v-8" fill="#fff" stroke="#e07b10" strokeWidth="1.500" /><ellipse cx="17.200" cy="12" rx="4.800" ry="2.200" fill="#fff" stroke="#e07b10" strokeWidth="1.500" /></S>
      </div>
      <S w={24} h={24} className="mt-[8px]"><OutBars /><path d="M22 8l-8 10-3-2 10-9z" fill="#fff" stroke={K} /><path d="M5 22c3-1 3-6 7-5 4 2 0 6-7 5z" fill={B} stroke={BD} strokeWidth="1.200" /></S>
      <S w={24} h={24} className="mt-[16px]"><path d="M11 22H2V1h18v8" stroke={K} strokeWidth="1.500" /><path d="M6 11h4v8H6zM10 6h4v8" stroke="#8a8886" strokeWidth="1.300" /><circle cx="17" cy="18" r="5.200" fill="#fff" stroke={BD} strokeWidth="1.600" /><path d="M17 15v3h2M15 11h4" stroke={BD} strokeWidth="1.600" /></S>
      <S w={23} h={23} className="mt-[15px]"><path d="M11.500 0v23M0 11.500h23" stroke="#201f1e" strokeWidth="1.800" /></S>
      <div className="mt-[49px] flex h-[114px] w-[24px] flex-col items-center rounded-[3px] bg-[#1d1d1d] text-white">
        <S w={15} h={15} className="mt-[3px]"><circle cx="7.500" cy="7.500" r="6.500" stroke="#e04040" /><circle cx="7.500" cy="7.500" r="4.500" fill="#f00a0a" /></S>
        <div className="mt-[6px] text-[19px] font-medium leading-[24px] [writing-mode:vertical-rl]"><T vertical w={87}>screenrec</T></div>
      </div>
      <div className="mt-auto flex h-[40px] w-full items-center justify-center border-t border-[#d8d6d4]">
        <S w={26} h={26}>
          <path d="M10.500 2.500l2.500 2 2.500-2 3.500 1.500.5 3.300 3 1.200 2 2.500-2 2 2 2-2 2.700-3 1-.5 3.300-3.500 1.500-2.500-2-2.500 2L7 22.500 6.500 19l-3-1-2-2.700 2-2.300-2-2 2-2.500 3-1.200L7 4z" stroke={K} strokeWidth="1.500" strokeLinejoin="round" />
          <circle cx="13" cy="13" r="4" stroke={K} strokeWidth="1.500" />
        </S>
      </div>
    </div>
  );
}

/* ---------- Status bar ---------- */
function StatusBar() {
  return (
    <div className="flex h-[29px] items-center border-t border-[#dddbd9] bg-[#f3f2f1] pt-[2px] text-[#484644]">
      <T w={74} className="ml-[5px] text-[14.700px]">Page 5 of 5</T>
      <div className="ml-auto flex items-center pr-[5px]">
        <S w={153} h={14} className="-mt-[2px]">
          <path d="M0 7.500h6M12 7h125M148 3v9M143.500 7.500h9" stroke="#484644" strokeWidth="1.400" />
          <path d="M61.500 1v12" stroke="#605e5c" strokeWidth="5" />
          <path d="M74.500 3.500v7" stroke="#605e5c" />
        </S>
        <T w={28} className="-mt-[2px] ml-[16px] text-[14px] text-[#605e5c]">82%</T>
        <S w={22} h={17} className="ml-[24px]"><path d="M1 1h20v15H1z" stroke="#605e5c" strokeWidth="1.500" /><path d="M4 7V4h4M14 4h4v3M18 10v3h-4M8 13H4v-3" stroke="#605e5c" strokeWidth="1.300" /></S>
        <T w={240} className="ml-[16px] text-[14.700px]">Update available (click to download)</T>
      </div>
    </div>
  );
}

/* ---------- Taskbar ---------- */
const Chrome = () => (
  <>
    <circle cx="15" cy="15" r="15" fill="#34a853" />
    <path d="M2 7.500A15 15 0 0 1 28 7.500H15L8.500 18.700z" fill="#ea4335" />
    <path d="M28 7.500A15 15 0 0 1 14 30l7.500-11.200L15 7.500z" fill="#fbbc04" />
    <circle cx="15" cy="15" r="7.500" fill="#fff" />
    <circle cx="15" cy="15" r="5.800" fill="#4285f4" />
  </>
);
const Teams = () => (
  <>
    <circle cx="24.500" cy="7" r="3" fill="#5059c9" />
    <circle cx="16.500" cy="5" r="4" fill="#7b83eb" />
    <path d="M20 11h8v9c0 4-5 5-8 3z" fill="#5059c9" />
    <path d="M10 11h13v11c0 9-13 9-13 0z" fill="#7b83eb" />
    <rect x="1" y="8" width="15" height="15" rx="1.500" fill="#4b53bc" />
    <path d="M5 12h7M8.500 12v8" stroke="#fff" strokeWidth="1.800" />
  </>
);

const apps: { dot?: boolean; icon: React.ReactNode }[] = [
  { icon: <Chrome /> },
  {
    icon: (
      <>
        <path d="M8 2h10c3 0 3 3 4 6h-5c-4 0-4 3-5 6l-2 7c-1 3-2 4-5 4-5 0-6-3-4-9l3-10c1-3 2-4 4-4z" fill="url(#cpA)" />
        <path d="M22 28H12c-3 0-3-3-4-6h5c4 0 4-3 5-6l2-7c1-3 2-4 5-4 5 0 6 3 4 9l-3 10c-1 3-2 4-4 4z" fill="url(#cpB)" />
      </>
    ),
  },
  {
    icon: (
      <>
        <Teams />
        <rect x="7" y="20" width="22" height="10" rx="1.500" fill="#2ce5dc" />
        <text x="18" y="28.300" fontSize="8.500" fontWeight="700" fill="#111" textAnchor="middle">NEW</text>
      </>
    ),
  },
  {
    icon: (
      <>
        <path d="M15 0c9 0 15 6 15 13 0 5-4 8-9 7 3-5-1-11-8-11C7 9 3 12 0 16 0 7 6 0 15 0z" fill="url(#edA)" />
        <path d="M0 16C3 9 11 8 15 11c-6 2-6 14 4 16 3 0 6 0 9-4-3 5-8 7-13 7C6 30 0 24 0 16z" fill="#1470c4" />
        <circle cx="7.500" cy="23" r="7" fill="#c8c6c4" />
        <circle cx="7.500" cy="20.500" r="2.500" fill="#605e5c" />
        <path d="M3 28c0-6 9-6 9 0z" fill="#605e5c" />
      </>
    ),
  },
  {
    icon: (
      <>
        <path d="M17 1c6 3 12 7 12 15 0 8-6 14-14 14S1 24 1 16c0-5 2-9 5-12 0 2 1 3 2 4 3-1 5-3 9-7z" fill="url(#ffA)" />
        <circle cx="15" cy="16.500" r="6.500" fill="#7542e5" />
        <path d="M5 12c4-2 8-1 10 2-3 0-4 2-6 3z" fill="#ff9a1f" />
      </>
    ),
  },
  {
    dot: true,
    icon: (
      <>
        <path d="M0 3c0-1 1-1.500 2-1.500h7L12.500 5H28c1 0 2 1 2 2v6H0z" fill="#e8a317" />
        <path d="M0 8h30v19c0 1-1 2-2 2H2c-1 0-2-1-2-2z" fill="#fdcf45" />
        <path d="M6 29v-6c0-1 1-2 2-2h14c1 0 2 1 2 2v6z" fill="#1c7fd0" />
        <path d="M10 24.500h10" stroke="#0b4f8c" strokeWidth="1.500" />
      </>
    ),
  },
  { icon: <Teams /> },
  {
    icon: (
      <>
        <circle cx="15" cy="15" r="15" fill="#0b5cff" />
        <text x="15" y="18" fontSize="9" fontWeight="700" fill="#fff" textAnchor="middle" textLength="21">zoom</text>
      </>
    ),
  },
  { dot: true, icon: <Chrome /> },
  {
    dot: true,
    icon: (
      <>
        <rect x="2" y="2" width="26" height="26" rx="2.500" fill="url(#phA)" />
        <path d="M3 26l11-13c1-1 2-1 3 0l11 13c0 1-1 2-2 2H5c-1 0-2-1-2-2z" fill="#38b6f5" />
        <path d="M8 28l8-8 9 8z" fill="#1a86dc" />
        <circle cx="21.500" cy="7.500" r="2" fill="#fff" />
      </>
    ),
  },
  {
    dot: true,
    icon: (
      <>
        <rect x="16" y="0" width="10" height="30" rx="1" fill="#dc9a10" />
        <rect x="9.500" y="7.500" width="10.500" height="22.500" rx="1" fill="#eebb28" />
        <rect x="3.500" y="15" width="10" height="15" rx="1" fill="#f7dc70" />
      </>
    ),
  },
];

function Taskbar() {
  return (
    <div className="flex h-[61px] items-center border-t border-black bg-[linear-gradient(90deg,#252a2a_0%,#25292a_22%,#1c2836_32%,#1c2836_40%,#222b30_48%,#1b2b35_60%,#232c2e_72%,#212a30_80%,#232629_100%)] text-white">
      <svg width="0" height="0" className="block">
        <defs>
          <linearGradient id="cpA" x1="0" y1="0" x2="0" y2="1"><stop stopColor="#1a7fe8" /><stop offset="0.500" stopColor="#2fc6b0" /><stop offset="1" stopColor="#f2d83a" /></linearGradient>
          <linearGradient id="cpB" x1="1" y1="0" x2="0" y2="1"><stop stopColor="#a75bf0" /><stop offset="0.500" stopColor="#ee5a9a" /><stop offset="1" stopColor="#fb8a4a" /></linearGradient>
          <linearGradient id="edA" x1="0" y1="0" x2="1" y2="0.600"><stop stopColor="#1d9fe8" /><stop offset="1" stopColor="#5fdc5a" /></linearGradient>
          <linearGradient id="ffA" x1="1" y1="0" x2="0.200" y2="1"><stop stopColor="#ffe234" /><stop offset="0.450" stopColor="#ff8a1c" /><stop offset="1" stopColor="#f5245c" /></linearGradient>
          <linearGradient id="phA" x1="0" y1="0" x2="1" y2="1"><stop stopColor="#2a5cc8" /><stop offset="1" stopColor="#123c94" /></linearGradient>
          <linearGradient id="winA" x1="0" y1="0" x2="1" y2="1"><stop stopColor="#7be6ff" /><stop offset="1" stopColor="#1593f5" /></linearGradient>
        </defs>
      </svg>
      <S w={34} h={38} className="-mt-[6px] ml-[27px]">
        <rect x="1" y="8" width="23" height="28" rx="2.500" fill="#48b0f5" />
        <path d="M4 24h4.500v9H4zM10.500 28H15v5h-4.500zM17 20h4.500v13H17z" fill="#0c62b4" />
        <circle cx="22" cy="10" r="10" fill="#f98d94" />
        <text x="22" y="15" fontSize="13" fill="#222" textAnchor="middle">1</text>
      </S>
      <div className="ml-[3px] flex w-[439px] flex-col text-[14.500px] leading-5">
        <T w={70} className="self-start">Upcoming</T>
        <T w={58} className="self-start text-[#d0d0d0]">Earnings</T>
      </div>
      <S w={30} h={30}><path d="M0 0h14v14H0zM15.500 0h14v14h-14zM0 15.500h14v14H0zM15.500 15.500h14v14h-14z" fill="url(#winA)" /></S>
      <div className="ml-[15px] flex h-[40px] w-[275px] items-center rounded-full border border-[#555d66] bg-[#3b434d]">
        <S w={19} h={20} className="ml-[14px]"><circle cx="8" cy="8" r="6.500" stroke="#fff" strokeWidth="1.800" fill="#5b636c" /><path d="M12.500 13l5 5.500" stroke="#fff" strokeWidth="2.200" /></S>
        <T w={51} className="ml-[12px] mt-[1px] text-[16px] text-[#d4d6d8]">Search</T>
        <S w={58} h={32} className="ml-[112px] mt-[2px]">
          <path d="M0 26l8-6h42l8 6c-4 4-8 6-12 6H12C8 32 4 30 0 26z" fill="#e3bd90" />
          <path d="M6 12l10-4 12-3 3 14-9 3-11 5z" fill="#f2f4f2" stroke="#5c9c62" strokeWidth="1.500" />
          <path d="M16 8l4 14M10 15l5-2M11 19l5-2M20 12l6-2M21 16l6-2" stroke="#9aa0a8" />
          <path d="M20 14l7-10 3.500 2-7 10z" fill="#f4923c" />
          <path d="M37 25V12c0-12 16-12 16 0v13c-4 3-12 3-16 0z" fill="#1478e8" />
          <path d="M39 26v-7c0-4 12-4 12 0v7c-4 2-8 2-12 0z" fill="#2f9bff" />
          <path d="M42 3.500c0-4 6-4 6 0M40 14h10" stroke="#0a4ba8" strokeWidth="1.500" />
        </S>
      </div>
      <div className="ml-[3px] flex">
        {apps.map((a, i) => (
          <div key={i} className="flex h-[60px] w-[55px] flex-col items-center pt-[15px]">
            <div className="relative">
              <S w={30} h={30}>{a.icon}</S>
              {i === 8 && (
                <span className="absolute -right-[7px] -top-[6px] flex h-[20px] w-[19px] items-center justify-center rounded-full bg-[#0e8494] text-[11px] text-white">H</span>
              )}
            </div>
            {a.dot && <span className="mt-[6px] h-[4px] w-[8px] rounded-full bg-[#9a9da0]" />}
          </div>
        ))}
      </div>
      <div className="ml-auto flex items-center pr-[26px]">
        <S w={14} h={8}><path d="M1 7l6-6 6 6" stroke="#fff" strokeWidth="1.800" /></S>
        <div className="ml-[22px] flex w-[38px] flex-col items-center text-[14.500px] leading-5"><T w={29}>ENG</T><T w={15}>IN</T></div>
        <S w={21} h={16} className="ml-[17px]">
          <path d="M1 6c5-6 14-6 19 0M4 9c4-4.500 9-4.500 13 0M7 12c2-2.500 5-2.500 7 0" stroke="#fff" strokeWidth="1.500" /><circle cx="10.500" cy="14" r="1.700" fill="#fff" />
        </S>
        <S w={21} h={18} className="ml-[9px]"><path d="M1 6.500h3.500L9 2v14l-4.500-4.500H1zM12 6c1.500 2 1.500 4 0 6M14.500 3.500c3 3.500 3 7.500 0 11M17 1.500c4.500 4.500 4.500 10.500 0 15" stroke="#fff" strokeWidth="1.400" /></S>
        <S w={22} h={18} className="ml-[9px]"><path d="M7 3.500h8.500a2.500 2.500 0 0 1 2.500 2.500v7a2.500 2.500 0 0 1-2.500 2.500h-12A2.500 2.500 0 0 1 1 13v-3M19.500 7.500v4" stroke="#fff" strokeWidth="1.500" /><path d="M8 6h7.500v7H4V9.500h3z" fill="#fff" /><path d="M4 0L1 6h2.500L3 10l4-5.500H4.500L6 0z" fill="#fff" /></S>
        <div className="ml-[16px] flex w-[80px] flex-col items-end text-[14.500px] leading-5"><T w={62}>07:56 PM</T><T w={77}>12-08-2024</T></div>
        <S w={18} h={20} className="ml-[11px]"><path d="M9 0c4 0 6.500 3 6.500 7v4l2 4.500H.5l2-4.500V7C2.500 3 5 0 9 0zM6 17h6c0 3.500-6 3.500-6 0z" fill="#8fe4fc" /></S>
      </div>
    </div>
  );
}

export default function App() {
  return (
    <div className="flex h-[1080px] w-[1920px] flex-col overflow-hidden bg-[#f3f2f1] font-['Open_Sans','Noto_Sans',sans-serif]">
      <TitleBar />
      <div className="relative z-10 h-[157px] shrink-0 bg-[#fafafa] shadow-[0_1px_4px_rgba(0,0,0,0.25)]">
        <Menu />
        <Ribbon />
      </div>
      <div className="flex h-[790px] shrink-0">
        <LeftRail />
        <div className="flex w-[1376px] shrink-0 flex-col">
          <div className="flex h-[746px]">
            <Canvas />
            <div className="flex flex-1 flex-col items-center bg-white">
              <div className="mt-[15px]"><Dbl left /></div>
              <S w={15} h={15} className="ml-[6px] mt-[20px]"><path d="M13.500 1v13L8 9.500H1.500v-4H8z" stroke="#252423" strokeWidth="1.500" /></S>
              <div className="mt-[11px] text-[17.500px] font-semibold leading-[22px] text-[#252423] [writing-mode:vertical-rl]"><T vertical w={54}>Filters</T></div>
            </div>
          </div>
          <PageTabs />
        </div>
        <BuildPane />
        <DataPane />
        <RightRail />
      </div>
      <StatusBar />
      <Taskbar />
    </div>
  );
}
